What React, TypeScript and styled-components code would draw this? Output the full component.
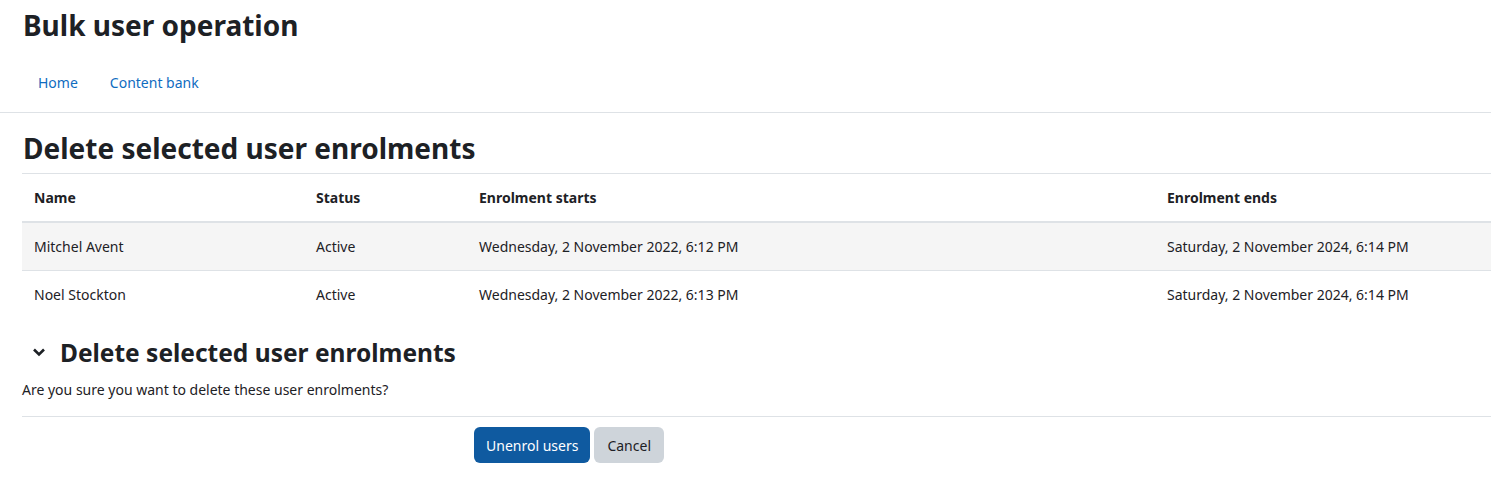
import React from 'react'
import styled, { createGlobalStyle } from 'styled-components'

const GlobalStyle = createGlobalStyle`
  html, body {
    margin: 0;
    padding: 0;
    background: #fff;
  }
  body {
    font-family: 'Noto Sans', 'Open Sans', sans-serif;
    color: #1d2125;
    font-size: 15px;
  }
`

const StyledPage = styled.div`
  width: 1491px;
  min-height: 501px;
  overflow: hidden;
`

const StyledHeader = styled.header`
  padding: 6px 0 0 23px;

  h1 {
    margin: 0;
    font-size: 28px;
    font-weight: 700;
    line-height: 38px;
  }
`

const StyledNav = styled.nav`
  display: flex;
  height: 60px;
  align-items: center;
  padding: 8px 0 0 22px;
  border-bottom: 1px solid #dee2e6;

  a {
    color: #0f6cbf;
    text-decoration: none;
    font-size: 14px;
    padding: 0 16px;
  }
`

const StyledMain = styled.main`
  padding-left: 22px;
`

const StyledHeading = styled.h2`
  margin: 0;
  padding: 16px 0 0 1px;
  font-size: 28px;
  font-weight: 700;
  line-height: 38px;
  height: 44px;
`

const StyledTable = styled.table`
  width: 100%;
  border-collapse: collapse;
  font-size: 14px;

  th, td {
    text-align: left;
    padding: 0 12px;
    height: 47px;
    vertical-align: middle;
    border-top: 1px solid #dee2e6;
  }

  th {
    font-weight: 700;
    border-bottom: 2px solid #dee2e6;
  }

  tbody tr:nth-of-type(odd) {
    background: #f5f5f5;
  }
`

const StyledSectionTitle = styled.div`
  display: flex;
  align-items: center;
  gap: 14px;
  margin-top: 17px;
  padding-left: 10px;
  height: 34px;

  h3 {
    margin: 0;
    font-size: 24.5px;
    font-weight: 700;
  }

  svg {
    width: 14px;
    height: 14px;
  }
`

const StyledText = styled.p`
  margin: 10px 0 0;
  font-size: 14px;
  line-height: 22px;
  padding-bottom: 15px;
  border-bottom: 1px solid #dee2e6;
`

const StyledActions = styled.div`
  display: flex;
  gap: 4px;
  padding: 10px 0 0 452px;
`

const StyledButton = styled.button<{ $primary?: boolean }>`
  font-family: 'Noto Sans', 'Open Sans', sans-serif;
  font-size: 14px;
  height: 36px;
  padding: 0 ${p => (p.$primary ? '12px' : '13px')};
  border: 0;
  border-radius: 6px;
  background: ${p => (p.$primary ? '#0f5aa0' : '#ced4da')};
  color: ${p => (p.$primary ? '#fff' : '#1d2125')};
`

const rows = [
  { name: 'Mitchel Avent', status: 'Active', start: 'Wednesday, 2 November 2022, 6:12 PM', end: 'Saturday, 2 November 2024, 6:14 PM' },
  { name: 'Noel Stockton', status: 'Active', start: 'Wednesday, 2 November 2022, 6:13 PM', end: 'Saturday, 2 November 2024, 6:14 PM' },
]

const App = () => {
  return (
    <StyledPage>
      <GlobalStyle />
      <StyledHeader>
        <h1>Bulk user operation</h1>
      </StyledHeader>
      <StyledNav>
        <a href="#">Home</a>
        <a href="#">Content bank</a>
      </StyledNav>
      <StyledMain>
        <StyledHeading>Delete selected user enrolments</StyledHeading>
        <StyledTable>
          <colgroup>
            <col style={{ width: 282 }} />
            <col style={{ width: 163 }} />
            <col style={{ width: 688 }} />
            <col />
          </colgroup>
          <thead>
            <tr>
              <th>Name</th>
              <th>Status</th>
              <th>Enrolment starts</th>
              <th>Enrolment ends</th>
            </tr>
          </thead>
          <tbody>
            {rows.map(r => (
              <tr key={r.name}>
                <td>{r.name}</td>
                <td>{r.status}</td>
                <td>{r.start}</td>
                <td>{r.end}</td>
              </tr>
            ))}
          </tbody>
        </StyledTable>
        <StyledSectionTitle>
          <svg viewBox="0 0 14 14">
            <path d="M2 4.5 7 9.5l5-5" fill="none" stroke="#1d2125" strokeWidth="2.6" />
          </svg>
          <h3>Delete selected user enrolments</h3>
        </StyledSectionTitle>
        <StyledText>Are you sure you want to delete these user enrolments?</StyledText>
        <StyledActions>
          <StyledButton $primary>Unenrol users</StyledButton>
          <StyledButton>Cancel</StyledButton>
        </StyledActions>
      </StyledMain>
    </StyledPage>
  )
}

export default App
